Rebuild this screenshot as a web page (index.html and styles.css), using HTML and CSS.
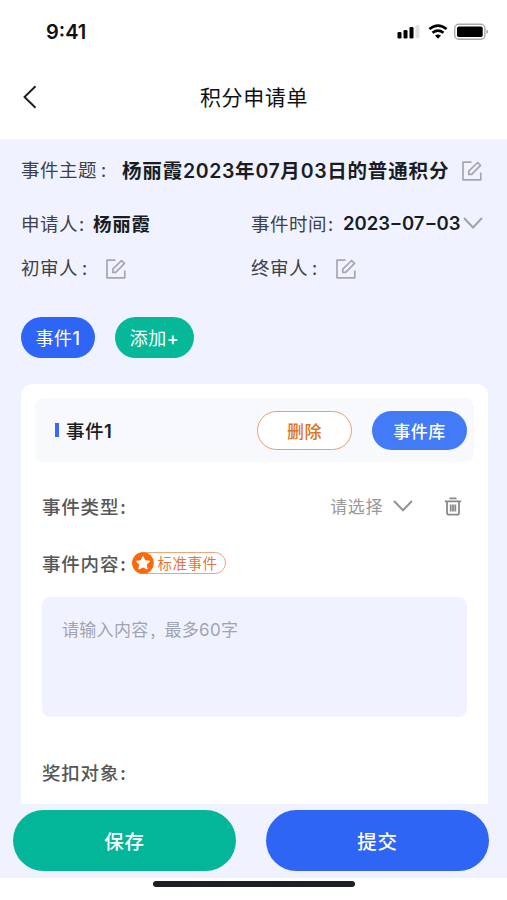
FILE: index.html
```html
<!DOCTYPE html>
<html lang="zh-CN">
<head>
<meta charset="utf-8">
<title>积分申请单</title>
<link rel="stylesheet" href="styles.css">
</head>
<body>
<svg class="defs" width="0" height="0">
  <symbol id="edit" viewBox="0 0 20 20"><path d="M9.500 1.200H1v17.600h17.800V11.500M6.800 13.400V10.200l8.800-8.700 2.900 2.900-8.800 9z" fill="none" stroke="#a5a6af" stroke-width="1.700" stroke-linejoin="round"/></symbol>
</svg>
<div class="screen">
  <header class="status">
    <span class="clock">9:41</span>
    <svg class="signals" width="92" height="20" viewBox="0 0 92 20">
      <rect x="0.5" y="9" width="4" height="6.5" rx="1.3"/><rect x="6.5" y="7" width="4" height="8.5" rx="1.3"/><rect x="12.5" y="4" width="4" height="11.5" rx="1.3"/><rect x="18.5" y="2" width="4" height="13.5" rx="1.3" fill="#e2e2e2"/>
      <g fill="none" stroke="#000" stroke-width="2.6"><path d="M32.4 6.1q8.600-7 17.200 0"/><path d="M35.500 9.800q5.500-4.300 11 0"/></g><path d="M38 12.500q3-2 6 0l-3 3.200z"/>
      <rect x="57.700" y="1.200" width="30.200" height="15" rx="4" fill="none" stroke="#aaa" stroke-width="1.4"/><rect x="60" y="3.400" width="25.700" height="10.600" rx="1.800"/><path d="M89.500 6.300q3 2.400 0 4.800z" fill="#999"/>
    </svg>
  </header>
  <nav class="nav">
    <svg class="back" width="14" height="24" viewBox="0 0 14 24"><path d="M12.500 1.300L1.500 12l11 10.700" fill="none" stroke="#1b1b1b" stroke-width="1.9"/></svg>
    <h1>积分申请单</h1>
  </nav>
  <main class="body">
    <section class="info">
      <div class="row subject"><span class="label">事件主题<i class="colon far">:</i></span><strong>杨丽霞<b>2023</b>年<b>07</b>月<b>03</b>日的普通积分</strong><svg class="edit"><use href="#edit"/></svg></div>
      <div class="row pair">
        <div class="cell"><span class="label">申请人<i class="colon">:</i></span><strong class="name">杨丽霞</strong></div>
        <div class="cell"><span class="label">事件时间<i class="colon">:</i></span><strong class="date">2023<em>-</em>07<em>-</em>03</strong><svg class="chev" width="20" height="12" viewBox="0 0 20 12"><path d="M1 1l9 9.500L19 1" fill="none" stroke="#a0a1aa" stroke-width="1.9"/></svg></div>
      </div>
      <div class="row pair reviewers">
        <div class="cell"><span class="label">初审人<i class="colon far">:</i></span><svg class="edit"><use href="#edit"/></svg></div>
        <div class="cell"><span class="label">终审人<i class="colon far">:</i></span><svg class="edit"><use href="#edit"/></svg></div>
      </div>
    </section>
    <div class="tabs"><button class="tab active">事件<b>1</b></button><button class="tab add">添加<b>+</b></button></div>
    <section class="card">
      <div class="card-head"><h2>事件<b>1</b></h2><button class="small delete">删除</button><button class="small library">事件库</button></div>
      <div class="field type"><span class="key">事件类型<i>:</i></span><span class="select">请选择</span>
        <svg class="chev" width="20" height="12" viewBox="0 0 20 12"><path d="M1 1l9 9.200L19 1" fill="none" stroke="#929292" stroke-width="2"/></svg>
        <svg class="trash" width="18" height="19" viewBox="0 0 18 19"><path d="M5.500 1.300h7M.8 4.300h16.400M3 4.500v11.200q0 2 2 2h8q2 0 2-2V4.500M6.700 7.500v7M9 7.500v7M11.300 7.500v7" fill="none" stroke="#898989" stroke-width="1.800"/></svg></div>
      <div class="field content"><span class="key">事件内容<i>:</i></span><span class="tag"><svg width="22" height="22" viewBox="0 0 22 22"><circle cx="11" cy="11" r="10.800" fill="#fa6a0a"/><path d="M11 4.600l2 4.100 4.600.6-3.300 3.200.8 4.500-4.100-2.100L6.900 17l.8-4.500-3.300-3.200 4.600-.6z" fill="#fff" stroke="#fff" stroke-linejoin="round"/></svg>标准事件</span></div>
      <div class="textarea">请输入内容<i>,</i>最多<b>60</b>字</div>
      <div class="field target"><span class="key">奖扣对象<i>:</i></span></div>
    </section>
    <footer class="actions"><button class="save">保存</button><button class="submit">提交</button></footer>
  </main>
  <div class="home"><span></span></div>
</div>
</body>
</html>
```

FILE: styles.css
```css
* { box-sizing: border-box; }
body { margin: 0; background: #fff; font-family: "Noto Sans CJK SC", sans-serif; color: #191c23; }
button { border: 0; padding: 0; font-family: inherit; }
i, em { font-style: normal; }
svg { display: block; flex: none; }
.defs { position: absolute; }
.screen { width: 507px; height: 900px; overflow: hidden; display: flex; flex-direction: column; }
.status { height: 56px; flex: none; display: flex; justify-content: space-between; padding: 20px 18px 0 46px; }
.clock { font: 600 20px/24px Inter, sans-serif; color: #111; }
.signals { margin-top: 3px; }
.nav { height: 83px; flex: none; display: grid; grid-template-columns: 200px 1fr; padding-top: 24px; }
.back { margin: 5px 0 0 23px; }
.nav h1 { margin: 0; font-size: 21px; line-height: 32px; font-weight: 400; letter-spacing: .6px; color: #111; }
.body { height: 739px; flex: none; background: #f0f3ff; padding: 0 20px 0 21px; display: flex; flex-direction: column; }
.info { height: 178px; flex: none; padding: 14px 0 0 0; }
.row { display: flex; height: 32px; align-items: center; white-space: nowrap; }
.row strong { font-size: 19.5px; font-weight: 700; letter-spacing: .85px; }
.row strong b { font: 600 19.5px Inter, sans-serif; letter-spacing: .6px; }
.label { font-size: 18.5px; letter-spacing: .5px; color: #3e414a; }
.colon { display: inline-block; padding-left: 1px; }
.colon.far { padding-left: 4px; }
.subject .label { width: 101px; }
.subject .edit { margin: 3px 0 0 auto; }
.subject { padding-right: 5px; }
.edit { width: 20px; height: 20px; }
.pair { display: grid; grid-template-columns: 230px 1fr; margin-top: 22px; }
.cell { display: flex; align-items: center; }
.cell .label { width: 72px; }
.cell + .cell .label { width: 91px; }
.row .name { font-size: 18.5px; letter-spacing: .7px; }
.row .date { font: 600 18.5px Inter, sans-serif; letter-spacing: 0; width: 118px; margin-left: 1px; }
.date em { display: inline-block; width: 12px; transform: scaleX(1.5); text-align: center; }
.cell .chev { margin: 0 0 0 2px; }
.reviewers { margin-top: 12px; }
.reviewers .cell .label, .reviewers .cell + .cell .label { width: 85px; }
.reviewers .edit { margin-top: 3px; }
.tabs { display: flex; gap: 20px; height: 67px; flex: none; }
.tab { height: 41px; border-radius: 21px; color: #fff; font-size: 18px; letter-spacing: .5px; padding-bottom: 1px; }
.tab b { font: 500 18px Inter, sans-serif; }
.active { width: 74px; background: #2f65f6; }
.add { width: 79px; background: #06b798; }
.card { height: 420px; flex: none; background: #fff; border-radius: 12px 12px 0 0; padding: 14px 14px 0; width: 467px; }
.card-head { height: 64px; background: #f8f9fd; border-radius: 8px; display: flex; align-items: center; padding: 0 7px 0 20px; }
.card-head h2 { margin: 0 auto 0 0; font-size: 18.5px; line-height: 28px; font-weight: 500; letter-spacing: .5px; display: flex; align-items: center; }
.card-head h2::before { content: ""; width: 4px; height: 14px; background: #3d68f0; margin-right: 7px; }
.card-head h2 b { font: 600 18.5px Inter, sans-serif; padding-top: 1px; }
.small { height: 39px; width: 95px; border-radius: 20px; font-size: 17px; font-weight: 500; letter-spacing: .5px; }
.delete { background: #fff; border: 1px solid #e5a173; color: #dc7425; margin-right: 20px; }
.library { background: #437af5; color: #fff; }
.field { display: flex; align-items: center; height: 30px; padding-left: 7px; }
.key { font-size: 18.5px; font-weight: 500; letter-spacing: .8px; color: #575757; }
.key i { padding-left: 1px; }
.type { margin-top: 29px; padding-right: 12px; }
.type .key { margin-right: auto; }
.select { font-size: 17px; letter-spacing: .6px; color: #999; margin-top: -2px; }
.type .chev { margin: 0 31px 0 10px; }
.content { margin-top: 27px; }
.tag { height: 22px; width: 94px; border: 1px solid #eba67e; border-radius: 11px; display: flex; align-items: center; font-size: 14.5px; line-height: 18px; padding-bottom: 1px; letter-spacing: .5px; color: #df7941; margin-left: 5px; white-space: nowrap; }
.tag svg { margin: 1px 4px 0 -1px; }
.textarea { height: 120px; margin: 19px 7px 0; border-radius: 8px; background: #f0f3ff; padding: 18px 20px; font-size: 17px; line-height: 28px; color: #a1a3b0; letter-spacing: .3px; }
.textarea i { display: inline-block; width: 16px; padding-left: 2px; }
.textarea b { font: 400 17px Inter, sans-serif; }
.target { margin-top: 40px; }
.actions { display: flex; gap: 30px; padding-top: 6px; margin: 0 -3px 0 -8px; flex: none; }
.actions button { width: 223px; height: 61px; border-radius: 31px; color: #fff; font-size: 19.5px; font-weight: 500; letter-spacing: .7px; }
.actions .save { background: #03b69a; }
.actions .submit { background: #2e65f5; }
.home { display: flex; justify-content: center; padding-top: 3px; }
.home span { width: 202px; height: 6px; border-radius: 3px; background: #1d2027; }
```
